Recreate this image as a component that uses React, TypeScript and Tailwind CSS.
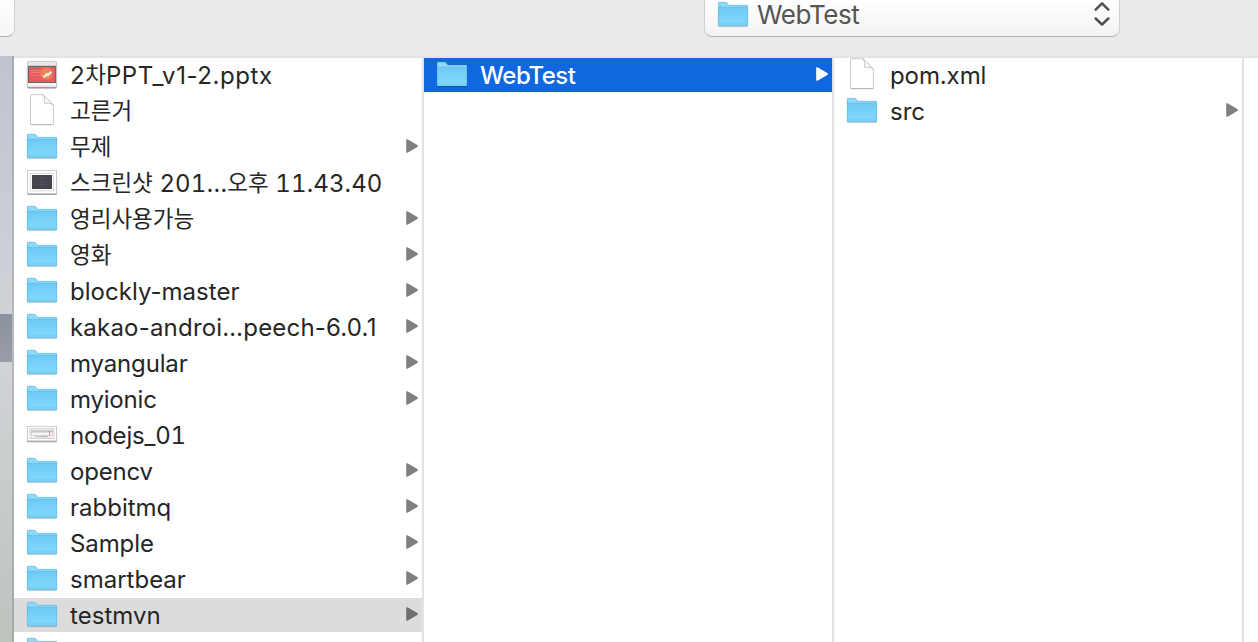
import React from "react";

type Kind = "folder" | "file" | "slides" | "shot" | "diagram";
type Item = { name: React.ReactNode; kind: Kind; track: string };

const Ko = ({ children }: { children: React.ReactNode }) => (
  <span className="align-[1px] text-[22.5px] leading-none tracking-normal">{children}</span>
);

const items: Item[] = [
  { name: <>2<Ko>차</Ko>PPT_v1-2.pptx</>, kind: "slides", track: "tracking-[0.58px]" },
  { name: <Ko>고른거</Ko>, kind: "file", track: "tracking-normal" },
  { name: <Ko>무제</Ko>, kind: "folder", track: "tracking-normal" },
  { name: <><Ko>스크린샷</Ko> 201…<Ko>오후</Ko> 11.43.40</>, kind: "shot", track: "tracking-[0.12px] tabular-nums" },
  { name: <Ko>영리사용가능</Ko>, kind: "folder", track: "tracking-normal" },
  { name: <Ko>영화</Ko>, kind: "folder", track: "tracking-normal" },
  { name: "blockly-master", kind: "folder", track: "tracking-[0.03px]" },
  { name: "kakao-androi…peech-6.0.1", kind: "folder", track: "tracking-[0.2px]" },
  { name: "myangular", kind: "folder", track: "tracking-[-0.15px]" },
  { name: "myionic", kind: "folder", track: "tracking-[-0.2px]" },
  { name: "nodejs_01", kind: "diagram", track: "tracking-[-0.22px] tabular-nums" },
  { name: "opencv", kind: "folder", track: "tracking-[-0.2px]" },
  { name: "rabbitmq", kind: "folder", track: "tracking-[0px]" },
  { name: "Sample", kind: "folder", track: "tracking-[-0.1px]" },
  { name: "smartbear", kind: "folder", track: "tracking-[0px]" },
  { name: "testmvn", kind: "folder", track: "tracking-[0.05px]" },
  { name: "", kind: "folder", track: "tracking-normal" },
];

function Defs() {
  return (
    <svg width="0" height="0" className="absolute">
      <defs>
        <linearGradient id="folderBody" x1="0" y1="0" x2="0" y2="1">
          <stop offset="0" stopColor="#6dcbf6" />
          <stop offset="1" stopColor="#84d8fb" />
        </linearGradient>
        <linearGradient id="frame" x1="0" y1="0" x2="0" y2="1">
          <stop offset="0" stopColor="#e9e9e9" />
          <stop offset="0.75" stopColor="#e4e4e4" />
          <stop offset="0.85" stopColor="#fafafa" />
          <stop offset="1" stopColor="#dcdcdc" />
        </linearGradient>
      </defs>
    </svg>
  );
}

function Folder() {
  return (
    <svg width="34" height="34" viewBox="0 0 34 34" className="block">
      <path d="M2.5 28.6H31.5" stroke="#000" strokeOpacity=".22" strokeWidth="1" />
      <path d="M2 5.2Q2 4 3.2 4H9.4Q10.4 4 11 4.8L12.3 6.4Q12.8 7 13.8 7H30.8Q32 7 32 8.2V12H2Z" fill="#8fd8f8" />
      <path d="M2 9.3H32V27.2Q32 28 31.2 28H2.8Q2 28 2 27.2Z" fill="url(#folderBody)" />
      <path d="M2.3 9.3H31.7" stroke="#5fbbe6" strokeWidth=".7" />
      <path d="M2.3 26H31.7" stroke="#5bb6df" strokeWidth=".6" strokeOpacity=".7" />
      <path d="M2.3 27.8V5.2Q2.3 4.3 3.2 4.3H9.4Q10.2 4.3 10.8 5L12.1 6.6Q12.7 7.3 13.8 7.3H30.8Q31.7 7.3 31.7 8.2V27.7H2.3" fill="none" stroke="#4fa9d2" strokeOpacity=".65" strokeWidth=".6" />
    </svg>
  );
}

function Doc() {
  return (
    <svg width="34" height="34" viewBox="0 0 34 34" className="block">
      <path d="M5.5 1.5Q5.5.7 6.3.7H18L28.4 11V29.8Q28.4 30.5 27.7 30.5H6.2Q5.5 30.5 5.5 29.8Z" fill="#fff" stroke="#c4c4c4" strokeWidth=".9" />
      <path d="M5.5 30.7H28.4" stroke="#b0b0b0" strokeWidth=".8" />
      <path d="M18 .7Q20.3 3 19.6 9.3Q26 8.8 28.4 11Z" fill="#f3f3f3" />
      <path d="M18 .7Q20 3 19.6 9.3Q26 8.6 28.4 11L18 .7Z" fill="#fafafa" stroke="#bdbdbd" strokeWidth=".8" />
    </svg>
  );
}

function Slides() {
  return (
    <svg width="34" height="34" viewBox="0 0 34 34" className="block">
      <rect x="2" y="4.4" width="30" height="26.4" rx="2" fill="#000" opacity=".2" />
      <rect x="2.3" y="3.4" width="29.4" height="26.4" rx="1.8" fill="url(#frame)" stroke="#b3b3b3" strokeWidth=".7" />
      <path d="M3 29.7H31" stroke="#888" strokeWidth=".8" />
      <rect x="3" y="7.8" width="28" height="17.2" fill="#66696c" />
      <rect x="4" y="9" width="26" height="15" fill="#e85a5c" />
      <circle cx="21.5" cy="15.5" r="6.2" fill="#ee8055" />
      <path d="M17.7 18.5L21.5 14.8L23.2 15.3L25.5 13.1L27 14.7L23 18.5L21.4 18.2L19.4 20Z" fill="#fbe6da" />
      <path d="M6 12.7H16M6 14.6H14.5" stroke="#fff" strokeOpacity=".4" strokeWidth=".8" strokeDasharray="1.5 .5" />
      <path d="M6 17.5H16" stroke="#fff" strokeOpacity=".22" strokeWidth=".7" />
    </svg>
  );
}

function Shot() {
  return (
    <svg width="34" height="34" viewBox="0 0 34 34" className="block">
      <rect x="2" y="5.6" width="30" height="23.4" rx=".8" fill="#000" opacity=".35" />
      <rect x="2.3" y="4.6" width="29.4" height="23" fill="#fff" stroke="#bcbcbc" strokeWidth=".7" />
      <rect x="5.2" y="7.3" width="23.6" height="17.6" fill="#fff" stroke="#c4c4c4" strokeWidth=".6" />
      <rect x="7" y="9" width="20" height="14" fill="#45464b" />
      <path d="M16 11.8L18 10.6" stroke="#7d4c59" strokeWidth="1" />
      <path d="M15.5 13H18.5" stroke="#485584" strokeWidth="1" />
      <path d="M13 16.3H21M12.5 18.3H19" stroke="#586069" strokeWidth=".6" />
    </svg>
  );
}

function Diagram() {
  return (
    <svg width="34" height="34" viewBox="0 0 34 34" className="block">
      <rect x="2" y="9.2" width="30" height="15" rx=".8" fill="#000" opacity=".35" />
      <rect x="2.3" y="8.3" width="29.4" height="14.6" fill="#fff" stroke="#bcbcbc" strokeWidth=".7" />
      <rect x="5" y="10.7" width="24" height="9.8" fill="#eee" stroke="#bebebe" strokeWidth=".6" />
      <path d="M6 13H28" stroke="#999" strokeWidth=".8" />
      <rect x="6.3" y="14.2" width="21.2" height="3" fill="#fafafa" stroke="#bbb" strokeWidth=".6" />
      <path d="M10.5 18.6H23" stroke="#aaa" strokeWidth=".9" strokeDasharray="2.5 .8" />
      <path d="M18.2 18.6H19.6M24.5 12.5V18" stroke="#bd908a" strokeWidth=".8" />
    </svg>
  );
}

const icons: Record<Kind, () => React.JSX.Element> = {
  folder: Folder,
  file: Doc,
  slides: Slides,
  shot: Shot,
  diagram: Diagram,
};

function Arrow({ className }: { className: string }) {
  return (
    <svg width="12" height="14" viewBox="0 0 12 14" className={className}>
      <path d="M.2.9Q.2-.1 1.4.2Q2 .4 2.8.9L11.3 6Q12.5 7 11.3 8L2.8 13.1Q2 13.6 1.4 13.8Q.2 14.1.2 13.1Z" fill="currentColor" />
    </svg>
  );
}

function Row({ item, tone = "plain", arrow = item.kind === "folder" }: { item: Item; tone?: "plain" | "gray" | "blue"; arrow?: boolean }) {
  const Icon = icons[item.kind];
  const tones = {
    plain: "text-[#262626]",
    gray: "bg-[#dcdcdc] text-[#262626]",
    blue: "bg-[#1167df] text-white",
  };
  const arrows = { plain: "text-[#7f7f7f]", gray: "text-[#6e6e6e]", blue: "text-white" };
  return (
    <div className={`mb-0.5 flex h-[34px] shrink-0 items-center pl-[11px] pr-1 ${tones[tone]}`}>
      <Icon />
      <span className={`ml-[11px] flex-1 whitespace-pre pt-0.5 text-2xl leading-[34px] ${item.track} ${tone === "blue" ? "font-medium" : ""}`}>
        {item.name}
      </span>
      {arrow && <Arrow className={`-mt-0.5 shrink-0 ${arrows[tone]}`} />}
    </div>
  );
}

export default function App() {
  return (
    <div className="flex h-[642px] w-[1258px] flex-col overflow-hidden bg-white font-['Inter','Noto_Sans_CJK_KR',sans-serif]">
      <Defs />
      <header className="flex h-14 shrink-0 items-start bg-[#ebebeb]">
        <div className="-ml-2 h-[37px] w-[23px] rounded-b-[8px] border border-t-0 border-[#cfcfcf] border-b-[#b2b2b2] bg-gradient-to-b from-white to-[#f6f6f6]" />
        <div className="ml-[689px] flex h-[37px] w-[416px] items-start rounded-b-[8px] border border-t-0 border-[#cfcfcf] border-b-[#b2b2b2] bg-gradient-to-b from-white to-[#f3f3f3] pl-[11px] pr-[9px]">
          <div className="-mt-0.5"><Folder /></div>
          <span className="ml-[7px] flex-1 text-[26px] leading-[30px] tracking-[-0.45px] text-[#555]">WebTest</span>
          <svg width="16" height="26" viewBox="0 0 16 26" className="mt-px" fill="none" stroke="#505050" strokeWidth="2.5" strokeLinecap="round" strokeLinejoin="round">
            <path d="M1.7 8.6L8 2.4L14.3 8.6M1.7 17.5L8 23.7L14.3 17.5" />
          </svg>
        </div>
      </header>
      <div className="flex min-h-0 flex-1">
        <div className="flex w-[14px] flex-col border-r-2 border-[#00000020] bg-gradient-to-b from-[#c0c4d0] via-[#d2d4d8] via-50% to-[#bdc3bd]">
          <div className="mt-[258px] h-12 bg-gradient-to-b from-[#8c92a0] to-[#989ca6]" />
        </div>
        <div className="flex min-w-0 flex-1 border-t-2 border-[#e3e3e3]">
          <div className="flex w-[410px] flex-col overflow-hidden border-r-2 border-[#e3e3e3]">
            {items.map((it, i) => (
              <Row key={i} item={it} tone={i === 15 ? "gray" : "plain"} />
            ))}
          </div>
          <div className="flex w-[410px] flex-col border-r-2 border-[#e3e3e3]">
            <Row item={{ name: "WebTest", kind: "folder", track: "tracking-[-0.5px]" }} tone="blue" />
          </div>
          <div className="flex w-[410px] flex-col border-r-2 border-[#e3e3e3]">
            <Row item={{ name: "pom.xml", kind: "file", track: "tracking-[-0.1px]" }} />
            <Row item={{ name: "src", kind: "folder", track: "tracking-[0px]" }} />
          </div>
        </div>
      </div>
    </div>
  );
}
